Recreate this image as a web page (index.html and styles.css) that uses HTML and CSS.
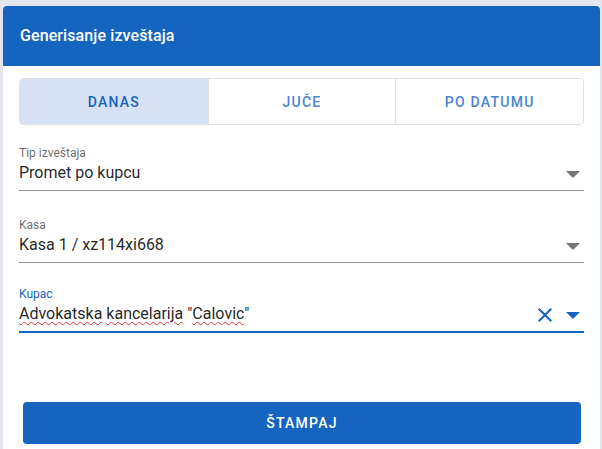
FILE: index.html
```html
<!DOCTYPE html>
<html lang="sr">
<head>
<meta charset="utf-8">
<title>Generisanje izveštaja</title>
<link rel="stylesheet" href="styles.css">
</head>
<body>
<div class="card">
  <header class="card-header">
    <h1 class="title">Generisanje izveštaja</h1>
  </header>
  <div class="card-body">
    <div class="tabs">
      <button class="tab tab-active">DANAS</button>
      <button class="tab">JUČE</button>
      <button class="tab">PO DATUMU</button>
    </div>

    <div class="field field-first">
      <label class="field-label">Tip izveštaja</label>
      <div class="field-control">
        <span class="field-value">Promet po kupcu</span>
        <svg class="arrow" width="14" height="7" viewBox="0 0 14 7"><path d="M0 0h14L7 7z" fill="#757575"/></svg>
      </div>
    </div>

    <div class="field field-second">
      <label class="field-label">Kasa</label>
      <div class="field-control">
        <span class="field-value">Kasa 1 / xz114xi668</span>
        <svg class="arrow" width="14" height="7" viewBox="0 0 14 7"><path d="M0 0h14L7 7z" fill="#757575"/></svg>
      </div>
    </div>

    <div class="field field-third field-focused">
      <label class="field-label">Kupac</label>
      <div class="field-control">
        <span class="field-value"><span class="misspelled">Advokatska</span> <span class="misspelled">kancelarija</span> "<span class="misspelled">Calovic</span>"</span>
        <svg class="clear" width="14" height="14" viewBox="5 5 14 14"><path d="M19 6.41L17.59 5 12 10.59 6.41 5 5 6.41 10.59 12 5 17.59 6.41 19 12 13.41 17.59 19 19 17.59 13.41 12z" fill="#1565c0"/></svg>
        <svg class="arrow" width="14" height="7" viewBox="0 0 14 7"><path d="M0 0h14L7 7z" fill="#1565c0"/></svg>
      </div>
    </div>

    <button class="print">ŠTAMPAJ</button>
  </div>
</div>
</body>
</html>
```
FILE: styles.css
```css
html, body {
  margin: 0;
  height: 100%;
  overflow: hidden;
}
body {
  background: #e3e6ee;
  font-family: Roboto, "Liberation Sans", sans-serif;
  color: rgba(0, 0, 0, 0.87);
}
.card {
  margin: 6px 2px 0 3px;
  background: #fff;
  border-radius: 4px;
  overflow: hidden;
  padding-bottom: 20px;
}
.card-header {
  background: #1565c0;
  height: 60px;
  display: flex;
  align-items: center;
  padding: 0 17px 2px;
  box-sizing: border-box;
}
.title {
  margin: 0;
  color: #fff;
  font-size: 16px;
  font-weight: 500;
  letter-spacing: 0.1px;
}
.card-body {
  padding: 12px 16px 0;
  display: flex;
  flex-direction: column;
}
.tabs {
  display: grid;
  grid-template-columns: 1fr 1fr 1fr;
  height: 47px;
  box-sizing: border-box;
  border: 1px solid #e0e0e0;
  border-radius: 4px;
  overflow: hidden;
}
.tab {
  border: 0;
  border-left: 1px solid #e0e0e0;
  background: #fff;
  font-family: inherit;
  font-size: 14px;
  font-weight: 500;
  letter-spacing: 1.25px;
  color: #4a86cf;
  padding: 0;
}
.tab:first-child {
  border-left: 0;
}
.tab-active {
  background: #d6e2f3;
  color: #1a62bf;
}
.field {
  display: flex;
  flex-direction: column;
}
.field-first { margin-top: 20px; }
.field-second { margin-top: 26px; }
.field-third { margin-top: 23px; }
.field-label {
  font-size: 12px;
  line-height: 16px;
  color: rgba(0, 0, 0, 0.6);
}
.field-control {
  display: flex;
  align-items: center;
  gap: 14px;
  padding: 0 4px 5px 0;
  border-bottom: 1px solid #949494;
}
.field-value {
  flex: 1;
  font-size: 16px;
  line-height: 24px;
}
.arrow {
  margin-top: 3px;
}
.clear {
  margin-top: 2px;
}
.field-focused .field-label {
  color: #1565c0;
}
.field-focused .field-control {
  border-bottom: 2px solid #1565c0;
  padding-bottom: 5px;
}
.misspelled {
  text-decoration: underline wavy #e53935;
  text-decoration-thickness: 1px;
  text-underline-offset: 2px;
}
.print {
  margin: 69px 3px 0 4px;
  height: 42px;
  border: 0;
  border-radius: 4px;
  background: #1565c0;
  color: #fff;
  font-family: inherit;
  font-size: 14px;
  font-weight: 500;
  letter-spacing: 1.25px;
}
```
